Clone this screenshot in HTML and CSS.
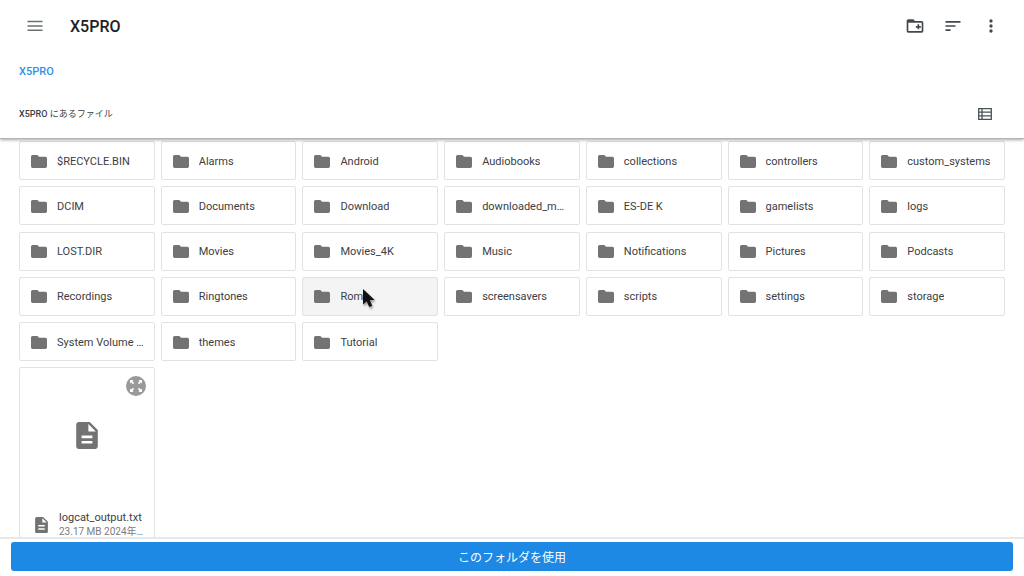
FILE: index.html
```html
<!DOCTYPE html>
<html lang="ja">
<head>
    <meta charset="UTF-8">
    <meta name="viewport" content="width=device-width, initial-scale=1.0">
    <title>X5PRO</title>
    <link rel="stylesheet" href="styles.css">
</head>
<body>
    <!-- shared icons -->
    <svg class="sprite" aria-hidden="true">
        <symbol id="folder" viewBox="2 4 20 16">
            <path d="M10 4H4c-1.1 0-2 .9-2 2v12c0 1.1.9 2 2 2h16c1.1 0 2-.9 2-2V8c0-1.1-.9-2-2-2h-8l-2-2z"/>
        </symbol>
        <symbol id="doc" viewBox="4 2 16 20">
            <path d="M14 2H6c-1.1 0-2 .9-2 2v16c0 1.1.9 2 2 2h12c1.1 0 2-.9 2-2V8l-6-6zm2 16H8v-2h8v2zm0-4H8v-2h8v2zm-3-5V3.5L18.5 9H13z"/>
        </symbol>
    </svg>

    <header class="header">
        <div class="toolbar">
            <button class="icon-btn menu" aria-label="メニュー">
                <svg width="16" height="12" viewBox="0 0 16 12"><path d="M.5 1.6h15M.5 5.900h15M.5 10.200h15" stroke="#6b7073" stroke-width="1.5"/></svg>
            </button>
            <h1>X5PRO</h1>
            <div class="actions">
                <button class="icon-btn" aria-label="新しいフォルダ">
                    <svg width="20" height="20" viewBox="0 0 24 24"><path d="M20 6h-8l-2-2H4c-1.1 0-2 .9-2 2v12c0 1.1.9 2 2 2h16c1.1 0 2-.9 2-2V8c0-1.1-.9-2-2-2zm0 12H4V8h16v10zm-7-4h2v2h2v-2h2v-2h-2v-2h-2v2h-2v2z"/></svg>
                </button>
                <button class="icon-btn" aria-label="並べ替え">
                    <svg width="20" height="20" viewBox="0 0 24 24"><path d="M3 18h6v-2H3v2zM3 6v2h18V6H3zm0 7h12v-2H3v2z"/></svg>
                </button>
                <button class="icon-btn" aria-label="その他">
                    <svg width="20" height="20" viewBox="0 0 24 24"><circle cx="12" cy="6" r="2"/><circle cx="12" cy="12" r="2"/><circle cx="12" cy="18" r="2"/></svg>
                </button>
            </div>
        </div>
        <nav class="breadcrumb"><a href="#">X5PRO</a></nav>
        <div class="list-head">
            <h2><b>X5PRO</b> にあるファイル</h2>
            <button class="icon-btn" aria-label="リスト表示">
                <svg width="14" height="12" viewBox="0 0 14 12"><path d="M.7.7h12.6v10.6H.7zM4 .7v10.6M.7 4.2h12.6M.7 7.8h12.6" fill="none" stroke="#4a5256" stroke-width="1.3"/></svg>
            </button>
        </div>
    </header>

    <main class="content">
        <div class="folders">
            <button class="folder"><svg><use href="#folder"/></svg><span>$RECYCLE.BIN</span></button>
            <button class="folder"><svg><use href="#folder"/></svg><span>Alarms</span></button>
            <button class="folder"><svg><use href="#folder"/></svg><span>Android</span></button>
            <button class="folder"><svg><use href="#folder"/></svg><span>Audiobooks</span></button>
            <button class="folder"><svg><use href="#folder"/></svg><span>collections</span></button>
            <button class="folder"><svg><use href="#folder"/></svg><span>controllers</span></button>
            <button class="folder"><svg><use href="#folder"/></svg><span>custom_systems</span></button>

            <button class="folder"><svg><use href="#folder"/></svg><span>DCIM</span></button>
            <button class="folder"><svg><use href="#folder"/></svg><span>Documents</span></button>
            <button class="folder"><svg><use href="#folder"/></svg><span>Download</span></button>
            <button class="folder"><svg><use href="#folder"/></svg><span>downloaded_m…</span></button>
            <button class="folder"><svg><use href="#folder"/></svg><span>ES-DE K</span></button>
            <button class="folder"><svg><use href="#folder"/></svg><span>gamelists</span></button>
            <button class="folder"><svg><use href="#folder"/></svg><span>logs</span></button>

            <button class="folder"><svg><use href="#folder"/></svg><span>LOST.DIR</span></button>
            <button class="folder"><svg><use href="#folder"/></svg><span>Movies</span></button>
            <button class="folder"><svg><use href="#folder"/></svg><span>Movies_4K</span></button>
            <button class="folder"><svg><use href="#folder"/></svg><span>Music</span></button>
            <button class="folder"><svg><use href="#folder"/></svg><span>Notifications</span></button>
            <button class="folder"><svg><use href="#folder"/></svg><span>Pictures</span></button>
            <button class="folder"><svg><use href="#folder"/></svg><span>Podcasts</span></button>

            <button class="folder"><svg><use href="#folder"/></svg><span>Recordings</span></button>
            <button class="folder"><svg><use href="#folder"/></svg><span>Ringtones</span></button>
            <button class="folder hovered"><svg><use href="#folder"/></svg><span>Roms</span>
                <svg class="cursor" viewBox="0 0 14 20"><path d="M1 1v15.500l3.700-3.300 2.500 5.800 3-1.300-2.500-5.600h5z" fill="#111"/></svg>
            </button>
            <button class="folder"><svg><use href="#folder"/></svg><span>screensavers</span></button>
            <button class="folder"><svg><use href="#folder"/></svg><span>scripts</span></button>
            <button class="folder"><svg><use href="#folder"/></svg><span>settings</span></button>
            <button class="folder"><svg><use href="#folder"/></svg><span>storage</span></button>

            <button class="folder"><svg><use href="#folder"/></svg><span>System Volume …</span></button>
            <button class="folder"><svg><use href="#folder"/></svg><span>themes</span></button>
            <button class="folder"><svg><use href="#folder"/></svg><span>Tutorial</span></button>
        </div>

        <div class="files">
            <article class="file">
                <div class="preview">
                    <svg class="doc-big"><use href="#doc"/></svg>
                    <button class="expand" aria-label="プレビュー">
                        <svg width="20" height="20" viewBox="0 0 20 20">
                            <circle cx="10" cy="10" r="10" fill="#999"/>
                            <path d="M4 4h3.600L6.400 5.200l1.800 1.800-1.200 1.200-1.800-1.800L4 7.600zM16 4v3.600l-1.200-1.200-1.800 1.800-1.200-1.200 1.800-1.800L12.400 4zM16 16h-3.600l1.200-1.200-1.800-1.800 1.200-1.200 1.800 1.800 1.200-1.200zM4 16v-3.600l1.200 1.200 1.800-1.800 1.200 1.200-1.800 1.800 1.200 1.200z" fill="#fff"/>
                        </svg>
                    </button>
                </div>
                <div class="info">
                    <svg class="doc-small"><use href="#doc"/></svg>
                    <div class="info-text">
                        <p class="name">logcat_output.txt</p>
                        <p class="meta">23.17 MB 2024年…</p>
                    </div>
                </div>
            </article>
        </div>
    </main>

    <footer class="footer">
        <button class="use-btn">このフォルダを使用</button>
    </footer>
</body>
</html>
```
FILE: styles.css
```css
:root {
    --text: #3c4043;
    --icon: #737373;
    --border: #e2e2e2;
    --blue: #1e88e5;
}

* {
    box-sizing: border-box;
}
body {
    margin: 0;
    height: 100vh;
    display: flex;
    flex-direction: column;
    overflow: hidden;
    background: #fff;
    color: var(--text);
    font-family: Roboto, "Noto Sans CJK JP", sans-serif;
    font-size: 11px;
}
button {
    font: inherit;
    color: inherit;
    cursor: pointer;
}
h1, h2, p {
    margin: 0;
}
.sprite {
    display: none;
}

/* header */
.header {
    position: relative;
    z-index: 1;
    padding-bottom: 12px;
    background: #fff;
    border-bottom: 1px solid #b4b4b4;
    box-shadow: 0 1px 3px rgba(0, 0, 0, 0.35);
}
.toolbar {
    display: flex;
    align-items: center;
    height: 52px;
    padding: 0 23px 0 24px;
}
.icon-btn {
    display: flex;
    align-items: center;
    justify-content: center;
    width: 20px;
    height: 24px;
    padding: 0;
    border: 0;
    background: none;
    fill: #41494d;
}
.menu {
    width: 22px;
}
h1 {
    margin-left: 24px;
    font-size: 16px;
    font-weight: 500;
    color: #202124;
}
.actions {
    display: flex;
    gap: 18px;
    margin-left: auto;
}
.breadcrumb {
    padding: 0 19px;
    line-height: 39px;
}
.breadcrumb a {
    font-weight: 500;
    color: #2f8fea;
    text-decoration: none;
}
.list-head {
    display: flex;
    align-items: center;
    justify-content: space-between;
    height: 35px;
    padding: 10px 29px 0 19px;
}
h2 {
    font-size: 9px;
    font-weight: 400;
}
h2 b {
    font-weight: 500;
}

/* folder and file grids */
.content {
    flex: 1;
    min-height: 0;
    overflow: hidden;
    padding: 2px 19px 0;
}
.folders, .files {
    display: grid;
    grid-template-columns: repeat(7, minmax(0, 1fr));
    column-gap: 6px;
}
.folders {
    min-height: 220px;
    align-content: space-between;
}
.folder {
    position: relative;
    display: flex;
    align-items: center;
    height: 39px;
    padding: 1px 8px 0 11px;
    gap: 10px;
    background: #fff;
    border: 1px solid var(--border);
    border-radius: 2px;
    text-align: left;
}
.folder svg {
    flex: none;
    width: 16px;
    height: 13px;
    fill: var(--icon);
}
.folder span {
    overflow: hidden;
    text-overflow: ellipsis;
    white-space: nowrap;
}
.folder.hovered {
    background: #f4f4f4;
}
.folder .cursor {
    position: absolute;
    left: 59px;
    top: 10px;
    width: 14px;
    height: 20px;
    filter: drop-shadow(1px 2px 1px rgba(0, 0, 0, 0.4));
}
.files {
    margin-top: 6px;
}
.file {
    border: 1px solid var(--border);
    border-radius: 2px;
}
.preview {
    position: relative;
    display: flex;
    align-items: center;
    justify-content: center;
    height: 134px;
}
.doc-big {
    width: 22px;
    height: 27px;
    fill: var(--icon);
}
.expand {
    position: absolute;
    top: 8px;
    right: 8px;
    display: flex;
    padding: 0;
    border: 0;
    background: none;
}
.info {
    display: flex;
    align-items: center;
    gap: 11px;
    height: 44px;
    padding: 2px 8px 0 15px;
}
.doc-small {
    flex: none;
    width: 13px;
    height: 16px;
    fill: var(--icon);
}
.info-text {
    min-width: 0;
}
.info p {
    overflow: hidden;
    text-overflow: ellipsis;
    white-space: nowrap;
    line-height: 14px;
}
.meta {
    font-size: 10px;
    color: #7c7c7c;
}

/* bottom bar */
.footer {
    position: relative;
    padding: 3px 11px 5px;
    background: #fff;
    border-top: 2px solid #e8e8e8;
}
.use-btn {
    display: block;
    width: 100%;
    height: 29px;
    padding: 0;
    border: 0;
    border-radius: 3px;
    background: var(--blue);
    color: #fff;
    font-size: 12px;
}
```
